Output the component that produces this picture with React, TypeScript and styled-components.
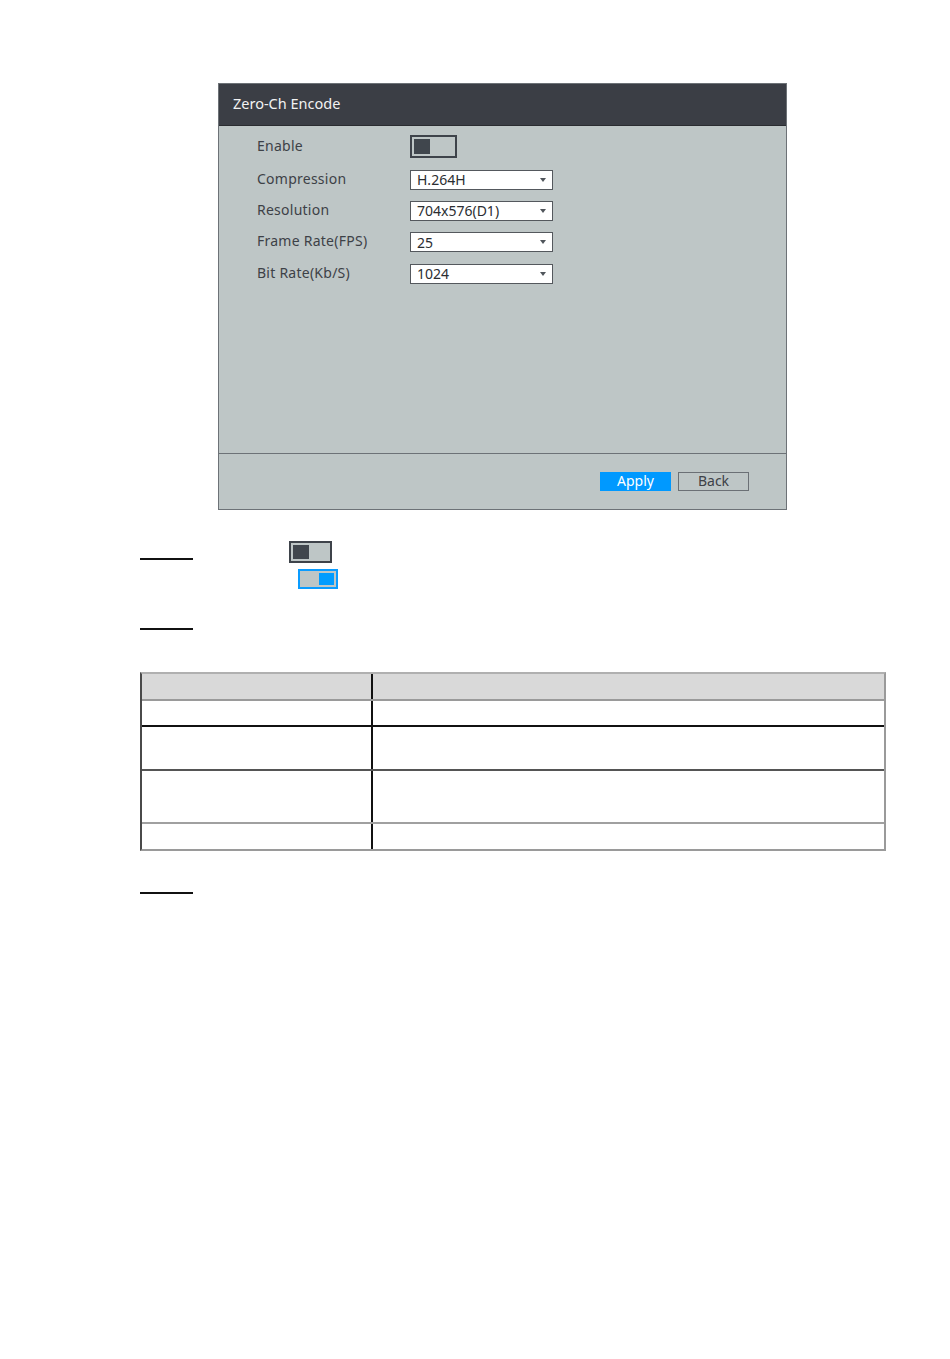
import * as React from "react";
import styled, { createGlobalStyle } from "styled-components";

const GlobalStyle = createGlobalStyle`
  html, body {
    margin: 0;
    padding: 0;
    background: #ffffff;
  }
  body {
    font-family: "Noto Sans", "Open Sans", sans-serif;
  }
`;

const Page = styled.div`
  width: 950px;
  height: 1359px;
  box-sizing: border-box;
  padding-top: 83px;
  display: flex;
  flex-direction: column;
`;

// dialog screenshot
const Dialog = styled.div`
  margin-left: 218px;
  width: 569px;
  height: 427px;
  box-sizing: border-box;
  border: 1px solid #6d7277;
  background: #bec6c6;
  display: flex;
  flex-direction: column;
`;

const DialogHeader = styled.div`
  height: 42px;
  background: #3b3e45;
  border-bottom: 1px solid #2a2c30;
  color: #f2f2f2;
  font-size: 14.5px;
  display: flex;
  align-items: center;
  padding-left: 14px;
  padding-bottom: 4px;
  box-sizing: border-box;
`;

const DialogBody = styled.div`
  flex: 1;
  padding: 3px 0 0 38px;
  display: flex;
  flex-direction: column;
`;

const FieldRow = styled.div<{ $h: number }>`
  height: ${({ $h }) => $h}px;
  display: flex;
  align-items: center;
`;

const Label = styled.div`
  width: 153px;
  font-size: 14px;
  color: #3d4147;
  letter-spacing: 0.25px;
  margin-top: -3px;
`;

const Switch = styled.div<{ $on?: boolean; $w: number; $h: number }>`
  width: ${({ $w }) => $w}px;
  height: ${({ $h }) => $h}px;
  box-sizing: border-box;
  border: 2px solid ${({ $on }) => ($on ? "#0a9cff" : "#3e434a")};
  background: #bec6c6;
  padding: 2px;
  display: flex;
  justify-content: ${({ $on }) => ($on ? "flex-end" : "flex-start")};
`;

const Knob = styled.div<{ $on?: boolean }>`
  width: ${({ $on }) => ($on ? 15 : 16)}px;
  height: 100%;
  background: ${({ $on }) => ($on ? "#009cff" : "#40464d")};
`;

const Select = styled.div`
  width: 143px;
  height: 20px;
  box-sizing: border-box;
  border: 1px solid #54585d;
  background: #ffffff;
  display: flex;
  align-items: center;
  justify-content: space-between;
  padding: 0 6px 0 6px;
  font-size: 14px;
  color: #2a2d31;
`;

const Arrow = styled.div`
  width: 0;
  height: 0;
  border-left: 3px solid transparent;
  border-right: 3px solid transparent;
  border-top: 4px solid #50555b;
`;

const DialogFooter = styled.div`
  height: 56px;
  border-top: 1px solid #6d7277;
  display: flex;
  align-items: flex-start;
  justify-content: flex-end;
  gap: 7px;
  padding: 18px 37px 0 0;
  box-sizing: border-box;
`;

const Button = styled.div<{ $primary?: boolean }>`
  width: 71px;
  height: 19px;
  box-sizing: border-box;
  display: flex;
  align-items: center;
  justify-content: center;
  font-size: 14px;
  padding-bottom: 2px;
  color: ${({ $primary }) => ($primary ? "#ffffff" : "#3d4147")};
  background: ${({ $primary }) => ($primary ? "#0099ff" : "transparent")};
  border: 1px solid ${({ $primary }) => ($primary ? "#0099ff" : "#6b7075")};
`;

// document body below the screenshot
const StepBlock = styled.div<{ $top: number }>`
  margin-top: ${({ $top }) => $top}px;
  margin-left: 140px;
  display: flex;
  flex-direction: column;
`;

const StepMark = styled.div`
  width: 53px;
  height: 2px;
  background: #111;
`;

const SwitchLine = styled.div<{ $left: number; $top: number }>`
  margin-left: ${({ $left }) => $left}px;
  margin-top: ${({ $top }) => $top}px;
  display: flex;
`;

const Table = styled.div`
  margin: 42px 0 0 140px;
  width: 746px;
  box-sizing: border-box;
  border-top: 2px solid #b0b0b0;
  border-left: 2px solid #4a4a4a;
  border-right: 2px solid #9a9a9a;
  border-bottom: 2px solid #9a9a9a;
  display: flex;
  flex-direction: column;
`;

const TRow = styled.div<{ $h: number; $line?: string; $head?: boolean }>`
  height: ${({ $h }) => $h}px;
  display: grid;
  grid-template-columns: 231px 1fr;
  background: ${({ $head }) => ($head ? "#d9d9d9" : "#ffffff")};
  border-bottom: ${({ $line }) => ($line ? `2px solid ${$line}` : "none")};
`;

const TCell = styled.div`
  border-right: 2px solid #111;
  &:last-child {
    border-right: none;
  }
`;

const rows = [
  { label: "Enable", h: 35 },
  { label: "Compression", h: 31 },
  { label: "Resolution", h: 31 },
  { label: "Frame Rate(FPS)", h: 32 },
  { label: "Bit Rate(Kb/S)", h: 31 },
];

const options = ["", "H.264H", "704x576(D1)", "25", "1024"];

const tableRows = [
  { h: 25, line: "#9a9a9a", head: true },
  { h: 24, line: "#111111" },
  { h: 42, line: "#555555" },
  { h: 51, line: "#a0a0a0" },
  { h: 25 },
];

export default function App() {
  return (
    <Page>
      <GlobalStyle />
      <Dialog>
        <DialogHeader>Zero-Ch Encode</DialogHeader>
        <DialogBody>
          {rows.map((r, i) => (
            <FieldRow key={r.label} $h={r.h}>
              <Label>{r.label}</Label>
              {i === 0 ? (
                <Switch $w={47} $h={23}>
                  <Knob />
                </Switch>
              ) : (
                <Select>
                  <span>{options[i]}</span>
                  <Arrow />
                </Select>
              )}
            </FieldRow>
          ))}
        </DialogBody>
        <DialogFooter>
          <Button $primary>Apply</Button>
          <Button>Back</Button>
        </DialogFooter>
      </Dialog>

      <SwitchLine $left={289} $top={31}>
        <Switch $w={43} $h={22}>
          <Knob />
        </Switch>
      </SwitchLine>
      <StepBlock $top={-5}>
        <StepMark />
      </StepBlock>
      <SwitchLine $left={298} $top={9}>
        <Switch $on $w={40} $h={20}>
          <Knob $on />
        </Switch>
      </SwitchLine>
      <StepBlock $top={39}>
        <StepMark />
      </StepBlock>

      <Table>
        {tableRows.map((t, i) => (
          <TRow key={i} $h={t.h} $line={t.line} $head={t.head}>
            <TCell />
            <TCell />
          </TRow>
        ))}
      </Table>

      <StepBlock $top={41}>
        <StepMark />
      </StepBlock>
    </Page>
  );
}
